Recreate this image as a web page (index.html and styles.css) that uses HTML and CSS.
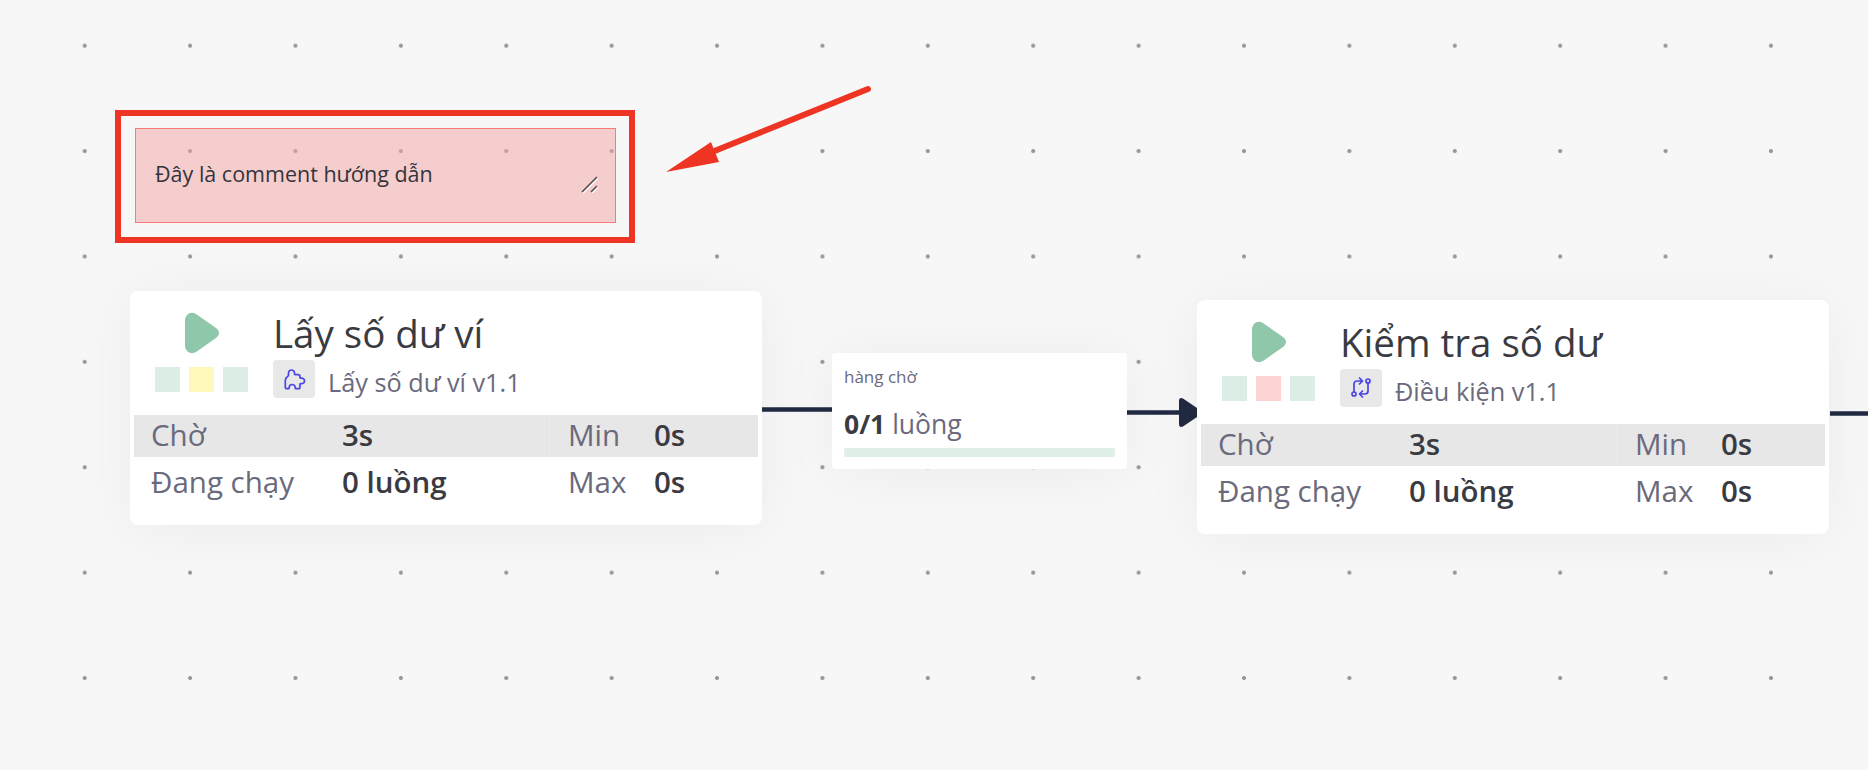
FILE: index.html
```html
<!DOCTYPE html>
<html lang="vi">
<head>
<meta charset="utf-8">
<title>Flow</title>
<link rel="stylesheet" href="styles.css">
</head>
<body>
<main class="canvas">
  <svg class="wires" width="1868" height="770" viewBox="0 0 1868 770">
    <path class="wire" d="M762 409.500H832"/>
    <path class="wire" d="M1127 412.500H1185"/>
    <path class="wire-head" d="M1179 401Q1179 397 1183 398.500L1197 408V417L1183 426.500Q1179 428 1179 424Z"/>
    <path class="wire" d="M1830 413.500H1868"/>
  </svg>

  <div class="highlight"></div>
  <div class="comment">
    <span class="comment-text">Đây là comment hướng dẫn</span>
    <svg class="grip" width="18" height="18" viewBox="0 0 18 18"><path class="grip-shadow" d="M2 17L17 2M11 17L17 11"/><path class="grip-line" d="M1 16L16 1M10 16L16 10"/></svg>
  </div>
  <svg class="arrow" width="230" height="110" viewBox="0 0 230 110"><path class="arrow-shaft" d="M211 4L55 67"/><path class="arrow-head" d="M9 87L54 57L62 77Z"/></svg>

  <article class="node node-a">
    <header class="node-head">
      <div class="status">
        <svg class="play" width="36" height="42" viewBox="0 0 36 42"><path d="M1 9C1 2 7-1 12 2L32 16C36 19 36 23 32 26L12 40C7 43 1 40 1 33Z"/></svg>
        <div class="lights"><i class="light green"></i><i class="light yellow"></i><i class="light green"></i></div>
      </div>
      <div class="titles">
        <h2 class="title">Lấy số dư ví</h2>
        <div class="sub">
          <span class="icon-box"><svg width="24" height="24" viewBox="0 0 24 24"><path class="ico" d="M9.500 3a3 3 0 0 1 3 3v.7a1 1 0 0 0 1 1h2.500a2 2 0 0 1 2 2v.8a.7.7 0 0 0 .9.7a2.800 2.800 0 0 1 3.600 2.700a2.800 2.800 0 0 1-3.600 2.700a.7.7 0 0 0-.9.7V20a1.700 1.700 0 0 1-1.700 1.700H14a.8.8 0 0 1-.8-.8v-.4a3 3 0 0 0-6 0v.4a.8.8 0 0 1-.8.8H5A1.700 1.700 0 0 1 3.300 20v-6.500a4 4 0 0 1 1.300-3L6 9a.8.8 0 0 0 .5-.8V6a3 3 0 0 1 3-3z"/></svg></span>
          <span class="sub-text">Lấy số dư ví v1.1</span>
        </div>
      </div>
    </header>
    <div class="stats">
      <span class="k zebra">Chờ</span><b class="v zebra">3s</b><span class="k2 zebra">Min</span><b class="v2 zebra">0s</b>
      <span class="k">Đang chạy</span><b class="v">0 luồng</b><span class="k2">Max</span><b class="v2">0s</b>
    </div>
  </article>

  <article class="queue">
    <div class="queue-label">hàng chờ</div>
    <div class="queue-count"><b>0/1</b> luồng</div>
    <div class="queue-bar"></div>
  </article>

  <article class="node node-b">
    <header class="node-head">
      <div class="status">
        <svg class="play" width="36" height="42" viewBox="0 0 36 42"><path d="M1 9C1 2 7-1 12 2L32 16C36 19 36 23 32 26L12 40C7 43 1 40 1 33Z"/></svg>
        <div class="lights"><i class="light green"></i><i class="light red"></i><i class="light green"></i></div>
      </div>
      <div class="titles">
        <h2 class="title">Kiểm tra số dư</h2>
        <div class="sub">
          <span class="icon-box"><svg width="24" height="24" viewBox="0 0 24 24"><g class="ico"><circle cx="19" cy="5" r="2"/><circle cx="5" cy="18" r="2"/><path d="M5 16V8a3 3 0 0 1 3-3h5.500M10.500 2l3 3-3 3M19 7V15a3 3 0 0 1-3 3h-5.500M13.500 15l-3 3 3 3"/></g></svg></span>
          <span class="sub-text">Điều kiện v1.1</span>
        </div>
      </div>
    </header>
    <div class="stats">
      <span class="k zebra">Chờ</span><b class="v zebra">3s</b><span class="k2 zebra">Min</span><b class="v2 zebra">0s</b>
      <span class="k">Đang chạy</span><b class="v">0 luồng</b><span class="k2">Max</span><b class="v2">0s</b>
    </div>
  </article>
</main>
</body>
</html>
```
FILE: styles.css
```css
* { box-sizing: border-box; }
html, body { margin: 0; height: 100%; overflow: hidden; }
body { background: #f7f7f7; font-family: "Open Sans", "Noto Sans", sans-serif; color: #3a3b42; }

.canvas {
  position: relative;
  width: 1868px;
  height: 770px;
  overflow: hidden;
  background-color: #f7f7f7;
  background-image: radial-gradient(circle at center, #97979d 0, #97979d 1.7px, transparent 2.3px);
  background-size: 105.4px 105.4px;
  background-position: 32px -7px;
}

.wires { position: absolute; left: 0; top: 0; }
.wire { stroke: #212a42; stroke-width: 4.500; fill: none; }
.wire-head { fill: #212a42; }

.highlight {
  position: absolute;
  left: 115px;
  top: 110px;
  width: 520px;
  height: 133px;
  border: 6px solid #ee3524;
}
.comment {
  position: absolute;
  left: 135px;
  top: 128px;
  width: 481px;
  height: 95px;
  padding: 0 19px;
  display: flex;
  align-items: flex-start;
  background: rgba(245, 163, 163, 0.5);
  border: 1px solid #f57a78;
}
.comment-text { margin-top: 31px; font-size: 21.500px; line-height: 28px; font-weight: 400; color: #33343b; }
.grip { position: absolute; right: 16px; top: 47px; }
.grip-line { stroke: #55504f; stroke-width: 1.600; fill: none; }
.grip-shadow { stroke: #ffffff; stroke-width: 1.500; fill: none; }

.arrow { position: absolute; left: 657px; top: 85px; }
.arrow-shaft { stroke: #ee3524; stroke-width: 6; stroke-linecap: round; fill: none; }
.arrow-head { fill: #ee3524; }

.node {
  position: absolute;
  width: 632px;
  height: 234px;
  padding: 0 4px;
  background: #fff;
  border-radius: 8px;
  box-shadow: 0 4px 60px rgba(0, 0, 0, 0.05);
}
.node-a { left: 130px; top: 291px; }
.node-b { left: 1197px; top: 300px; }

.node-head { display: flex; height: 124px; padding: 21px 0 0 21px; }
.status { width: 93px; margin-right: 25px; display: flex; flex-direction: column; align-items: center; }
.play { margin-left: 1px; display: block; }
.play path { fill: #8fc7aa; }
.lights { margin-top: 13px; display: flex; gap: 9px; }
.light { width: 25px; height: 25px; display: block; }
.green { background: #dcede5; }
.yellow { background: #fff8bd; }
.red { background: #fcd4d4; }

.titles { display: flex; flex-direction: column; }
.title { margin: 0; height: 48px; font-size: 38.500px; line-height: 43px; font-weight: 400; color: #3a3b42; }
.sub { display: flex; align-items: center; }
.icon-box {
  width: 42px;
  height: 38px;
  display: flex;
  align-items: center;
  justify-content: center;
  background: #e8e8e8;
  border-radius: 4px;
}
.ico, .ico path, .ico circle { fill: none; stroke: #4a45e4; stroke-width: 1.700; stroke-linecap: round; stroke-linejoin: round; }
.sub-text { margin-left: 13px; padding-top: 6px; font-size: 25.250px; line-height: 32px; color: #6a6a7c; }

.stats {
  display: grid;
  grid-template-columns: 208px 207px 105px 104px;
  grid-template-rows: 42px 46px;
  font-size: 29.500px;
  line-height: 40px;
}
.zebra { background: #e7e7e7; }
.k, .k2 { color: #6a6a7c; }
.k { padding-left: 17px; }
.k2 { padding-left: 19px; }
.k2.zebra { border-left: 1px solid #ebebeb; padding-left: 18px; }
.v, .v2 { font-weight: 600; color: #3a3b42; }
.k:not(.zebra), .k2:not(.zebra), .v:not(.zebra), .v2:not(.zebra) { padding-top: 5px; }

.queue {
  position: absolute;
  left: 832px;
  top: 353px;
  width: 295px;
  height: 116px;
  padding: 12px 12px 0 12px;
  background: #fff;
  border-radius: 4px;
  box-shadow: 0 4px 60px rgba(0, 0, 0, 0.05);
}
.queue-label { font-size: 17px; line-height: 24px; color: #6a6a7c; }
.queue-count { margin-top: 19px; font-size: 26.500px; line-height: 32px; color: #6a6a7c; }
.queue-count b { font-weight: 700; color: #3a3b42; }
.queue-bar { margin-top: 8px; height: 9px; background: #dfeee7; border-radius: 2px; }
```
